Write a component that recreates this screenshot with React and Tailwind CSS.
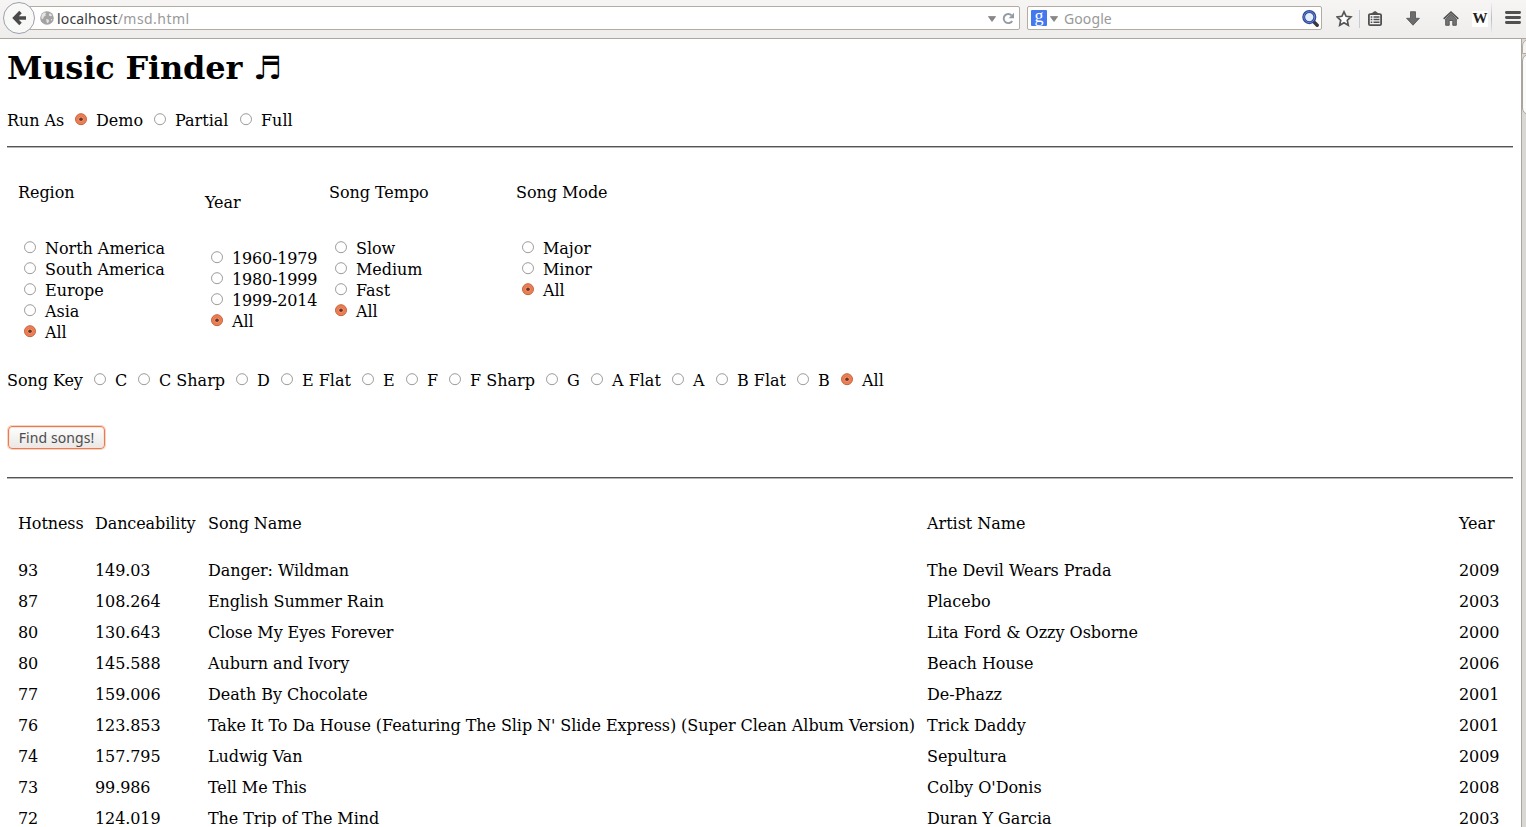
import React from 'react';

function Radio({ checked }) {
  return (
    <svg className="h-[13px] w-[13px] shrink-0" viewBox="0 0 13 13">
      {checked ? (
        <>
          <circle cx="7" cy="6.2" r="5.5" fill="#f17f53" stroke="#c4623e" strokeWidth="1" />
          <circle cx="7" cy="6.2" r="3.2" fill="#f59a75" stroke="#d96f47" strokeWidth="0.8" />
          <circle cx="7" cy="6.2" r="1.8" fill="#6b3420" />
        </>
      ) : (
        <circle cx="7" cy="6.2" r="5.5" fill="#fefefe" stroke="#94918c" strokeWidth="0.9" />
      )}
    </svg>
  );
}

function Option({ label, checked, className = '' }) {
  return (
    <label className={`flex h-[21px] shrink-0 items-center whitespace-nowrap ${className}`}>
      <span className="-mt-[2px] mr-[9px] flex">
        <Radio checked={checked} />
      </span>
      <span>{label}</span>
    </label>
  );
}

function Group({ title, options, className }) {
  return (
    <div className={className}>
      <div className="h-[21px] leading-[21px] tracking-[-0.05px]">{title}</div>
      <div className="mt-[35px] pl-[5px]">
        {options.map((o) => (
          <Option key={o} label={o} checked={o === 'All'} className={/^\d/.test(o) ? 'tracking-[-0.18px]' : 'tracking-[-0.04px]'} />
        ))}
      </div>
    </div>
  );
}

function Rule() {
  return <div className="h-[2px] border-t border-[#555] bg-[#b5b5b5]" />;
}

const keys = [
  ['C', 'w-[44px]'],
  ['C Sharp', 'w-[98px]'],
  ['D', 'w-[45px]'],
  ['E Flat', 'w-[81px]'],
  ['E', 'w-[44px]'],
  ['F', 'w-[43px]'],
  ['F Sharp', 'w-[97px]'],
  ['G', 'w-[45px]'],
  ['A Flat', 'w-[81px]'],
  ['A', 'w-[44px]'],
  ['B Flat', 'w-[81px]'],
  ['B', 'w-[44px]'],
  ['All', ''],
];

const songs = [
  ['93', '149.03', 'Danger: Wildman', 'The Devil Wears Prada', '2009'],
  ['87', '108.264', 'English Summer Rain', 'Placebo', '2003'],
  ['80', '130.643', 'Close My Eyes Forever', 'Lita Ford & Ozzy Osborne', '2000'],
  ['80', '145.588', 'Auburn and Ivory', 'Beach House', '2006'],
  ['77', '159.006', 'Death By Chocolate', 'De-Phazz', '2001'],
  ['76', '123.853', "Take It To Da House (Featuring The Slip N' Slide Express) (Super Clean Album Version)", 'Trick Daddy', '2001'],
  ['74', '157.795', 'Ludwig Van', 'Sepultura', '2009'],
  ['73', '99.986', 'Tell Me This', "Colby O'Donis", '2008'],
  ['72', '124.019', 'The Trip of The Mind', 'Duran Y Garcia', '2003'],
];

const columnTracking = [
  'tracking-[-0.1px]',
  'tracking-[-0.1px]',
  'tracking-[-0.072px]',
  'tracking-[-0.03px]',
  'tracking-[-0.1px]',
];

function Row({ cells, className }) {
  return (
    <div className={`grid grid-cols-[77px_113px_719px_532px_60px] items-center whitespace-nowrap pl-[11px] leading-[15px] ${className}`}>
      {cells.map((c, i) => (
        <span key={i} className={columnTracking[i]}>{c}</span>
      ))}
    </div>
  );
}

function Caret() {
  return (
    <svg className="mt-px h-[6px] w-[8px] shrink-0" viewBox="0 0 8 6">
      <path d="M.3.5h7.4L4 5.6z" fill="#888" stroke="#666" strokeWidth=".5" />
    </svg>
  );
}

function Toolbar() {
  return (
    <header className="flex h-[39px] shrink-0 items-start border-b border-[#aea79f] bg-linear-to-b from-[#f6f5f4] to-[#efedeb] font-['Noto_Sans',sans-serif] text-[14px]">
      <div className="z-10 ml-[3px] mt-[2px] flex h-8 w-8 shrink-0 items-center justify-center rounded-full border border-[#9ba1ac] bg-[#f8f8f7]">
        <svg className="h-[16px] w-[15px]" viewBox="0 0 15 16">
          <path d="M8.500 2 2.700 8l5.800 6M3.500 8H14" fill="none" stroke="#4a4a4a" strokeWidth="3.500" />
        </svg>
      </div>
      <div className="-ml-[6px] mt-[6px] flex h-6 w-[991px] shrink-0 items-center rounded-r-[2px] border border-[#b2aca2] bg-white pl-[10px] pr-[4px]">
        <svg className="h-[14px] w-[14px] shrink-0" viewBox="0 0 14 14">
          <circle cx="7" cy="7" r="6.800" fill="#a3a3a3" />
          <path d="M1.800 3.600 4.200 1.600l2 .3-.9 1.500.6 1-2.100 1.400L3 8.200 1.200 7.200zM9 2.500l1.900.3 1.300 2.100-1.500.4L8.900 4.500zM6.200 8l2.100.4.9 1.500-1.400 2.300-1.200-.9zM10.800 8l1.600.2-1 1.900z" fill="#e4e4e4" />
        </svg>
        <span className="ml-[3px] flex-1 whitespace-nowrap text-[#3b3b3b]">
          <span className="tracking-[0.17px]">localhost</span>
          <span className="tracking-[0.45px] text-[#999]">/msd.html</span>
        </span>
        <Caret />
        <svg className="ml-[6px] h-[13px] w-[13px] shrink-0" viewBox="0 0 13 13">
          <path d="M9.600 3.300A4.600 4.600 0 1 0 10.200 9" fill="none" stroke="#929ba3" strokeWidth="1.900" />
          <path d="M12 .8v5.400H6.600z" fill="#929ba3" />
        </svg>
      </div>
      <div className="ml-[7px] mt-[6px] flex h-6 w-[295px] shrink-0 items-center rounded-[2px] border border-[#b2aca2] bg-white pl-[3px] pr-[2px]">
        <span className="flex h-4 w-4 items-center justify-center rounded-[1px] bg-[#4478ef] pb-[4px] font-['Liberation_Serif',serif] text-[18px] leading-none text-white">g</span>
        <span className="ml-[3px] flex"><Caret /></span>
        <span className="ml-[6px] flex-1 tracking-[0.1px] text-[#999]">Google</span>
        <svg className="h-[17px] w-[17px] shrink-0" viewBox="0 0 17 17">
          <path d="m11.500 11.500 3.700 3.700" stroke="#3a3a3a" strokeWidth="3.400" strokeLinecap="round" />
          <circle cx="7.300" cy="7.100" r="5.600" fill="#e3edf9" stroke="#2c459c" strokeWidth="2.900" />
          <circle cx="7.300" cy="7.100" r="5.500" fill="none" stroke="#6886cb" strokeWidth="1" />
        </svg>
      </div>
      <div className="mt-[3px] flex h-[31px] items-center">
        <svg className="ml-[14px] h-[17px] w-[17px]" viewBox="0 0 17 17">
          <path d="m8 1.800 2.100 4.500 4.800.6-3.600 3.400 1 4.900L8 12.700l-4.300 2.500 1-4.900L1.100 6.900l4.800-.6z" fill="#fff" stroke="#555" strokeWidth="1.700" />
        </svg>
        <span className="ml-[6px] h-[18px] w-px bg-[#c4ccd6]" />
        <svg className="-mt-px ml-[8px] h-[15px] w-[14px]" viewBox="0 0 14 15">
          <path d="m3.500 3 2.700-2.200h1.600L10.500 3z" fill="#555" stroke="#555" />
          <rect x=".9" y="3.100" width="12.200" height="11" rx="1.200" fill="#f5f5f5" stroke="#505050" strokeWidth="1.800" />
          <path d="M2.700 5.900h1.600M5.500 5.900h6M2.700 8.600h1.600M5.500 8.600h6M2.700 11.300h1.600M5.500 11.300h6" stroke="#505050" strokeWidth="1.500" />
        </svg>
        <svg className="ml-[24px] h-[15px] w-[14px]" viewBox="0 0 14 15">
          <path d="M4.500.7h5v6.600h3.900L7 14.200.6 7.300h3.900z" fill="#6c6c6c" stroke="#505050" strokeWidth=".8" />
        </svg>
        <svg className="ml-[23px] h-[15px] w-[16px]" viewBox="0 0 16 15">
          <path d="M2.700 8 8 3.200 13.300 8v6.300H9.800V9.500H6.200v4.800H2.700z" fill="#737373" stroke="#505050" strokeWidth=".9" />
          <path d="M.7 7.900 8 1.200l7.300 6.700" fill="none" stroke="#505050" strokeWidth="1.700" />
        </svg>
        <span className="ml-[13px] flex h-4 w-4 items-center justify-center bg-white font-['Liberation_Serif',serif] text-[15px] font-bold leading-none text-[#222]">W</span>
        <span className="ml-[3px] h-[31px] w-px bg-linear-to-b from-[#eee] via-[#b5bcc7] to-[#eee]" />
        <svg className="-mt-[2px] ml-[13px] h-[13px] w-[16px]" viewBox="0 0 16 13">
          <path d="M1.400 1.500h13.200M1.400 6.500h13.200M1.400 11.500h13.200" stroke="#505050" strokeWidth="2.800" strokeLinecap="round" />
        </svg>
      </div>
    </header>
  );
}

export default function App() {
  return (
    <div className="flex h-[827px] w-[1526px] flex-col overflow-hidden bg-white font-['DejaVu_Serif',serif] text-[16px] leading-[21px] text-black">
      <Toolbar />
      <div className="flex min-h-0 flex-1">
        <main className="w-[1521px] shrink-0 overflow-hidden pl-[7px] pr-2">
          <h1 className="mt-[10px] h-[38px] whitespace-pre text-[32px] font-bold leading-[38px] tracking-[-0.18px]">
            Music Finder <span className="font-['DejaVu_Sans',sans-serif]">♬</span>
          </h1>
          <div className="mt-[23px] flex h-[21px]">
            <span className="w-[67px] shrink-0 tracking-[-0.05px]">Run As</span>
            <Option label="Demo" checked className="w-[79px]" />
            <Option label="Partial" className="w-[86px]" />
            <Option label="Full" />
          </div>
          <div className="mt-[15px]"><Rule /></div>
          <section className="flex h-[160px] pl-[11px] pt-[34px]">
            <Group className="w-[187px]" title="Region" options={['North America', 'South America', 'Europe', 'Asia', 'All']} />
            <Group className="w-[124px] pt-[10px]" title="Year" options={['1960-1979', '1980-1999', '1999-2014', 'All']} />
            <Group className="w-[187px]" title="Song Tempo" options={['Slow', 'Medium', 'Fast', 'All']} />
            <Group className="w-[187px]" title="Song Mode" options={['Major', 'Minor', 'All']} />
          </section>
          <div className="mt-[62px] flex h-[21px]">
            <span className="w-[86px] shrink-0 tracking-[-0.05px]">Song Key</span>
            {keys.map(([k, w]) => (
              <Option key={k} label={k} checked={k === 'All'} className={w} />
            ))}
          </div>
          <button className="ml-px mt-[35px] flex h-[23px] w-[97px] items-center justify-center rounded-[4px] border border-[#e67c52] bg-linear-to-b from-[#fefefe] to-[#e9e8e7] font-['Noto_Sans',sans-serif] text-[14px] tracking-[0.08px] text-[#4c4c4c] shadow-[0_0_0_1px_#f9d3c3,inset_0_0_0_1px_#fbe3d9]">
            <span>Find songs!</span>
          </button>
          <div className="mt-[28px]"><Rule /></div>
          <section className="pt-[34px]">
            <Row className="h-[21px]" cells={['Hotness', 'Danceability', 'Song Name', 'Artist Name', 'Year']} />
            <div className="mt-[21px]">
              {songs.map((s) => (
                <Row key={s[2]} className="h-[31px]" cells={s} />
              ))}
            </div>
          </section>
        </main>
        <aside className="w-[5px] shrink-0 overflow-hidden border-l border-[#aaa59f] bg-[#dad8d5]">
          <div className="flex h-[15px] w-[14px] items-center rounded-t-[7px] border border-[#b1aba4] bg-[#f4f3f2] pl-[3px]">
            <span className="h-px w-[5px] bg-[#777]" />
          </div>
          <div className="h-[61px] w-[14px] rounded-[7px] border border-[#a9a39c] bg-[#fafafa]" />
        </aside>
      </div>
    </div>
  );
}
